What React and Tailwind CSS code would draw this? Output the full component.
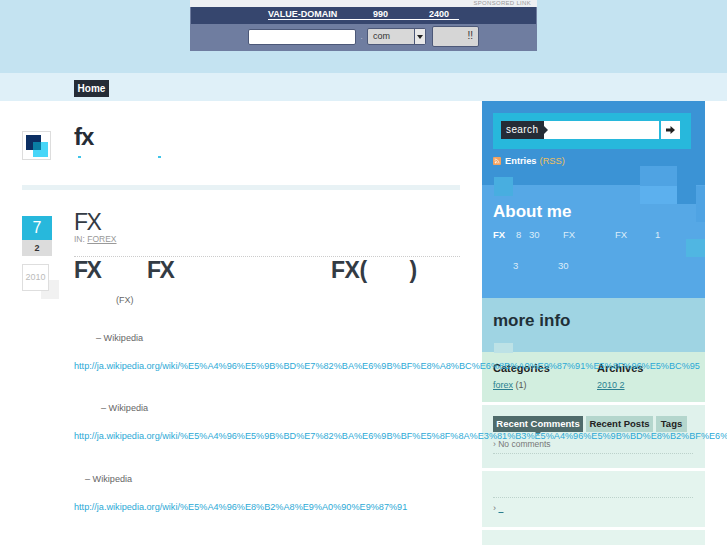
import { Rss } from "lucide-react";

const sans = "font-['Liberation_Sans',Arial,sans-serif]";

function Banner() {
  return (
    <div className="w-[347px] h-[51px] bg-[#6f7da0] flex flex-col">
      <div className="h-[7px] bg-[#eef0f3] text-[6px] leading-[7px] text-right pr-[6px] text-[#9a9a9a] tracking-[0.3px]">
        SPONSORED LINK
      </div>
      <div className="mx-[1px] h-[17px] bg-[#36466e] text-white text-[9px] font-bold flex justify-center pt-[3px]">
        <span className="w-[191px] h-[10px] leading-[9px] border-b border-white flex whitespace-nowrap">
          <span className="w-[105px]">VALUE-DOMAIN</span>
          <span className="w-[56px]">990</span>
          <span>2400</span>
        </span>
      </div>
      <div className="flex items-center pl-[58px] pt-[2px]">
        <div className="w-[108px] h-[16px] bg-white rounded-[2px] border border-[#4c5878]"></div>
        <div className="w-[11px] text-center text-[#c9d0de] text-[8px]">.</div>
        <div className="w-[59px] h-[17px] bg-[#d8d8d8] rounded-[2px] border border-[#4c5878] flex items-center text-[9px] text-[#333]">
          <span className="flex-1 pl-[5px]">com</span>
          <span className="w-[11px] h-full bg-[#e8e8e8] border-l border-[#4c5878] flex items-center justify-center">
            <span className="border-x-[3px] border-t-[4px] border-x-transparent border-t-[#222]"></span>
          </span>
        </div>
        <div className="ml-[6px] w-[47px] h-[21px] bg-[#d6d6d6] rounded-[2px] border border-[#4c5878] text-[10px] text-[#333] text-right pr-[5px] leading-[18px]">
          !!
        </div>
      </div>
    </div>
  );
}

function DateBox() {
  return (
    <div className="w-[30px] shrink-0 relative">
      <div className="h-[24px] bg-[#27b8dc] text-white text-[16px] leading-[24px] text-center">7</div>
      <div className="h-[16px] bg-[#dcdcdc] text-[#333] text-[9px] font-bold leading-[16px] text-center">2</div>
      <div className="mt-[8px] w-[27px] h-[27px] bg-white border border-[#dedede] text-[#bbb] text-[9px] leading-[25px] text-center relative z-10">
        2010
      </div>
      <div className="absolute left-[19px] top-[64px] w-[18px] h-[19px] bg-[#f1f1f1]"></div>
    </div>
  );
}

function WikiLine({ indent, url }) {
  return (
    <>
      <p className="h-[28px] leading-[28px] text-[9.13px] text-[#666]" style={{ paddingLeft: indent }}>
        – Wikipedia
      </p>
      <p className="h-[42.5px] leading-[28px] text-[9.13px] text-[#2ba9d6] whitespace-nowrap relative z-10">{url}</p>
    </>
  );
}

function Post() {
  return (
    <div className="flex pl-[22px] pt-[26px] gap-[22px]">
      <DateBox />
      <div className="w-[386px] shrink-0 -mt-[6px]">
        <h2 className="text-[23px] tracking-[-1.5px] leading-[24px] text-[#333b44] h-[24px]">FX</h2>
        <p className="text-[8.5px] leading-[10px] text-[#999] h-[22px]">
          IN: <span className="underline">FOREX</span>
        </p>
        <div className="border-t border-dotted border-[#ccc]"></div>
        <h3 className="text-[23px] tracking-[-1.5px] font-bold leading-[27px] text-[#333b44] flex h-[35px]">
          <span className="w-[73px]">FX</span>
          <span className="w-[184px]">FX</span>
          <span className="tracking-[-0.5px]">FX(</span>
          <span className="ml-[43px]">)</span>
        </h3>
        <p className="h-[31.5px] pl-[42px] text-[9px] leading-[16px] text-[#666]">(FX)</p>
        <WikiLine indent="22px" url="http://ja.wikipedia.org/wiki/%E5%A4%96%E5%9B%BD%E7%82%BA%E6%9B%BF%E8%A8%BC%E6%8B%A0%E9%87%91%E5%8F%96%E5%BC%95" />
        <WikiLine indent="27px" url="http://ja.wikipedia.org/wiki/%E5%A4%96%E5%9B%BD%E7%82%BA%E6%9B%BF%E5%8F%8A%E3%81%B3%E5%A4%96%E5%9B%BD%E8%B2%BF%E6%98%93%E6%B3%95" />
        <WikiLine indent="11px" url="http://ja.wikipedia.org/wiki/%E5%A4%96%E8%B2%A8%E9%A0%90%E9%87%91" />
      </div>
    </div>
  );
}

function Sidebar() {
  return (
    <div className="w-[223px] shrink-0 flex flex-col relative">
      <div className="h-[84px] bg-[#3b93d5] pt-[12px] px-[11px] relative">
        <div className="w-[198px] h-[36px] bg-[#27b8dc] flex pt-[8px] pl-[8px]">
          <div className="w-[43px] h-[18px] bg-[#252c36] text-white text-[10px] leading-[17px] pl-[5px] relative tracking-[0.4px]">
            search
            <span className="absolute left-[43px] top-[5px] border-y-[4px] border-l-[4px] border-y-transparent border-l-[#252c36]"></span>
          </div>
          <div className="w-[115px] h-[18px] bg-white"></div>
          <div className="ml-[2px] w-[19px] h-[18px] bg-white flex items-center justify-center">
            <svg width="9" height="8" viewBox="0 0 9 8">
              <path d="M0 2.5H4.5V0L9 4L4.5 8V5.5H0Z" fill="#222" />
            </svg>
          </div>
        </div>
        <p className="mt-[6px] flex items-center text-[9.3px] font-bold text-white leading-[12px]">
          <span className="w-[8px] h-[8px] bg-[#f3a25e] rounded-[1px] flex items-center justify-center mr-[4px]">
            <Rss size={6} color="white" strokeWidth={3} />
          </span>
          Entries <span className="ml-[3px] font-normal text-[#f0c060]">(RSS)</span>
        </p>
      </div>

      <div className="h-[113px] bg-[#56a8e6] pt-[16px] pl-[11px] text-white">
        <h2 className="text-[17px] font-bold leading-[22px]">About me</h2>
        <p className="mt-[6px] text-[9.5px] leading-[11px] flex h-[31px] text-[#dcedfa]">
          <b className="w-[23px] text-white">FX</b>
          <span className="w-[13px]">8</span>
          <span className="w-[34px]">30</span>
          <span className="w-[52px]">FX</span>
          <span className="w-[40px]">FX</span>
          <span>1</span>
        </p>
        <p className="text-[9.5px] leading-[11px] flex text-[#dcedfa] pl-[20px]">
          <span className="w-[45px]">3</span>
          <span>30</span>
        </p>
      </div>

      <div className="h-[54px] bg-[#9fd4e3] pt-[12px] pl-[11px]">
        <h2 className="text-[17px] font-bold leading-[22px] text-[#1f3038]">more info</h2>
      </div>

      <div className="h-[50px] bg-[#d2eedf] pt-[10px] pl-[11px] flex text-[9px] text-[#555]">
        <div className="w-[104px]">
          <h4 className="font-bold text-[#222] text-[11px] leading-[13px]">Categories</h4>
          <p className="mt-[4px] leading-[12px]">
            <span className="underline text-[#2a7f90]">forex</span> (1)
          </p>
        </div>
        <div>
          <h4 className="font-bold text-[#222] text-[11px] leading-[13px]">Archives</h4>
          <p className="mt-[4px] leading-[12px] underline text-[#2a7f90]">2010 2 </p>
        </div>
      </div>

      <div className="mt-[3px] h-[63px] bg-[#e0f2ec] pt-[11px] pl-[11px] pr-[12px]">
        <div className="flex gap-[3px] text-[9.5px] font-bold leading-[16px]">
          <span className="h-[16px] w-[90px] text-center bg-[#4f6b6b] text-white relative">
            Recent Comments
            <span className="absolute left-[42px] top-[16px] border-x-[3px] border-t-[3px] border-x-transparent border-t-[#4f6b6b]"></span>
          </span>
          <span className="h-[16px] w-[67px] text-center bg-[#b4d6cd] text-[#222]">Recent Posts</span>
          <span className="h-[16px] w-[31px] text-center bg-[#b4d6cd] text-[#222]">Tags</span>
        </div>
        <p className="mt-[7px] text-[8.5px] leading-[11px] text-[#777] pb-[3px] border-b border-dotted border-[#bcd2cb]">› No comments</p>
      </div>

      <div className="mt-[3px] h-[56px] bg-[#e4f4ee] pt-[26px] pl-[11px] pr-[12px]">
        <div className="border-t border-dotted border-[#bcd2cb]"></div>
        <p className="mt-[5px] text-[9px] leading-[11px] text-[#777]">
          › <span className="underline text-[#2a7f90]">&nbsp;&nbsp;</span>
        </p>
      </div>

      <div className="mt-[3px] h-[20px] bg-[#e4f4ee]"></div>

      {/* decorative tiles */}
      <div className="absolute left-[12px] top-[76px] w-[19px] h-[19px] bg-[#48aee0]"></div>
      <div className="absolute left-[158px] top-[65px] w-[37px] h-[20px] bg-[#4fa3e3]"></div>
      <div className="absolute left-[158px] top-[85px] w-[37px] h-[18px] bg-[#5cb0ee]"></div>
      <div className="absolute left-[195px] top-[84px] w-[19px] h-[19px] bg-[#3b93d5]"></div>
      <div className="absolute left-[214px] top-[85px] w-[9px] h-[36px] bg-[#4fa3e3]"></div>
      <div className="absolute left-[204px] top-[138px] w-[19px] h-[18px] bg-[#50b6e2]"></div>
      <div className="absolute left-[12px] top-[242px] w-[19px] h-[10px] bg-[#bde2e6]"></div>
    </div>
  );
}

export default function App() {
  return (
    <div className={`${sans} w-full h-[545px] overflow-hidden bg-white`}>
      <div className="h-[73px] bg-[#c4e3f1] flex justify-center">
        <Banner />
      </div>
      <div className="h-[28px] bg-[#dff0f8] pl-[74px] pt-[7px]">
        <span className="block w-[35px] h-[17px] bg-[#252c36] text-white text-[10px] font-bold leading-[17px] text-center">Home</span>
      </div>
      <div className="flex">
        <div className="w-[482px] shrink-0">
          <div className="h-[84px] pl-[22px] flex gap-[23px] pt-[22px]">
            <div className="mt-[8px] w-[29px] h-[29px] border border-[#ddd] relative bg-white">
              <div className="absolute left-[3px] top-[3px] w-[15px] h-[15px] bg-[#0c2f63]"></div>
              <div className="absolute left-[10px] top-[10px] w-[15px] h-[15px] bg-[#48d6f8]"></div>
              <div className="absolute left-[10px] top-[10px] w-[8px] h-[8px] bg-[#0a7ea4]"></div>
            </div>
            <div>
              <h1 className="text-[24px] font-bold leading-[28px] text-[#252c36] tracking-[-1px]">fx</h1>
              <div className="mt-[5px] flex">
                <span className="ml-[4px] w-[3px] h-[2px] bg-[#3fc4e8]"></span>
                <span className="ml-[77px] w-[3px] h-[2px] bg-[#3fc4e8]"></span>
              </div>
            </div>
          </div>
          <div className="ml-[22px] w-[438px] h-[5px] bg-[#e8f2f5]"></div>
          <Post />
        </div>
        <Sidebar />
      </div>
    </div>
  );
}
